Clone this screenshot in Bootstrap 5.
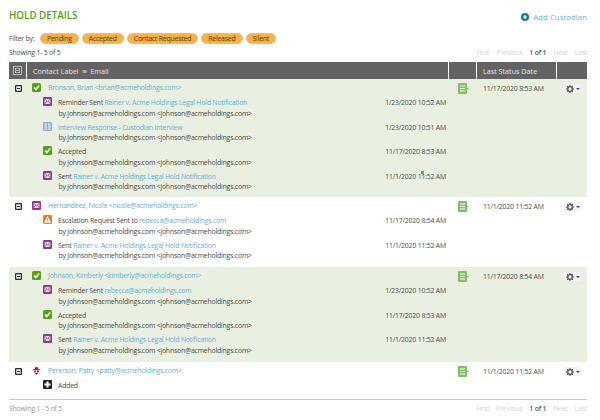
<!DOCTYPE html>
<html lang="en"><head><meta charset="utf-8"><title>Hold Details</title>
<link href="https://cdn.jsdelivr.net/npm/bootstrap@5.3.0/dist/css/bootstrap.min.css" rel="stylesheet">
<style>
html,body{width:600px;height:420px;overflow:hidden;background:#fff}
body{font-family:"Open Sans","Liberation Sans",sans-serif;font-size:6.9px;letter-spacing:-.2px;line-height:10px;color:#4a4a4a}
a{color:#5fb0d8;text-decoration:none}
.page-wrap{width:578px;margin-left:9px}
.title-bar{height:31px;padding-top:8px}
.hold-title{font-size:9.8px;line-height:16px;font-weight:600;color:#4ea510;margin:0;letter-spacing:0}
.add-link{font-size:7.7px;line-height:16px;margin-top:1px;letter-spacing:.1px}
.filter-bar{height:13px;margin-top:1px}
.pill-tag{background:#fbb040;border:1px solid #c9c3b4;border-radius:7px;color:#4a3d20;height:11px;line-height:9px;padding:0 6px;font-size:6.9px}
.pill-tag+.pill-tag{margin-left:3px}
.filter-label{width:31px}
.count-bar{height:17px;padding-top:2px;line-height:12px}
.pager{color:#d4d4d4}
.pager span{margin-left:7px}
.pager .cur{color:#555;font-weight:600}
.tbl{width:578px;table-layout:fixed;border-collapse:separate;border-spacing:0;margin:0}
.tbl th{background:#636363;color:#e8e8e8;font-weight:400;font-size:7.2px;letter-spacing:0;height:17px;padding:0 0 0 6px;border-right:1px solid #fff;vertical-align:middle}
.tbl th:last-child{border-right:0}
.tbl td{padding:0;vertical-align:top}
.c-tog{width:18px}.c-doc{width:28px}.c-date{width:80px}.c-gear{width:30px}
.row-on td{background:#e9f0e1}
.row-a{height:118px}.row-b{height:70px}.row-c{height:95px}.row-d{height:37px}
.tog-box{display:block;margin:5px 0 0 5px}
.head-main{display:flex;align-items:flex-start;height:15px;margin-top:3px;margin-left:5px}
.head-main .ic{margin-top:1px}
.ic{flex:none;display:block}
.name-line{margin-left:7px;line-height:12px}
.event-wrap{padding:0 0 0 16px}
.event-item{display:flex;height:24.5px}
.event-short{height:15px}
.ev-body{flex:1;padding-left:6px;padding-top:1px}
.ev-top{display:flex;justify-content:space-between;padding-right:3px}
.by-line{padding-left:.5px;margin-top:.5px}
.date-text{position:relative}
.stray-dot{position:absolute;left:36px;top:-1px;width:3px;height:3px;background:#0be60b}
.doc-ic{margin:4px 0 0 9px}
.st-date{display:block;padding:5px 0 0 6px;white-space:nowrap}
.gear-btn{display:flex;align-items:center;gap:2px;width:17px;height:9px;margin:5px 0 0 7px;background:#f2f2f2;border-radius:2px;padding-left:2px}
.caret-mini{width:0;height:0;border:2px solid transparent;border-top:2.5px solid #444;border-bottom:0}
.foot-bar{border-top:1px solid #c8c8c8;height:20px;padding-top:3px;line-height:12px;color:#999}
</style></head><body>
<svg width="0" height="0" class="d-block" style="position:absolute" aria-hidden="true"><defs>
<symbol id="i-tog" viewBox="0 0 9 9"><rect x="1" y="1" width="7" height="7" rx="1" fill="#2b2b2b"/><rect x="2.300" y="2.300" width="4.400" height="4.400" fill="#fff"/><rect x="3" y="4" width="3" height="1" fill="#2b2b2b"/></symbol>
<symbol id="i-tog-h" viewBox="0 0 9 9"><rect x=".5" y=".5" width="8" height="8" fill="#4c4c4c" stroke="#ddd" stroke-width=".8"/><rect x="2.3" y="2.3" width="4.4" height="4.4" fill="none" stroke="#eee" stroke-width=".7"/><rect x="3" y="4.1" width="3" height=".8" fill="#eee"/></symbol>
<symbol id="i-check" viewBox="0 0 9 9"><rect width="9" height="9" rx="1.5" fill="#4ea510"/><path d="M2 4.5 3.8 6.5 7.2 2.4" fill="none" stroke="#fff" stroke-width="1.6"/></symbol>
<symbol id="i-mail" viewBox="0 0 9 9"><rect width="9" height="9" rx="1.2" fill="#8a3a8e"/><rect x="1.6" y="2" width="5.8" height="5" fill="#f1dff2"/><path d="M1.6 2 4.5 4.8 7.4 2M1.6 7 3.6 4.2M7.4 7 5.4 4.2" fill="none" stroke="#8a3a8e" stroke-width=".8"/></symbol>
<symbol id="i-book" viewBox="0 0 9 9"><rect width="9" height="9" rx="1.2" fill="#8fb3d6"/><rect x="1.6" y="1.2" width="5.8" height="6.6" fill="#c4d6e8"/><rect x="4.2" y="1" width=".7" height="7" fill="#7d9fc2"/></symbol>
<symbol id="i-warn" viewBox="0 0 9 9"><rect width="9" height="9" rx="1.2" fill="#f47b20"/><path d="M4.5 1 8 7.8H1Z" fill="#fff"/><rect x="4.1" y="3.2" width=".8" height="2.4" fill="#f47b20"/><rect x="4.1" y="6.1" width=".8" height=".8" fill="#f47b20"/></symbol>
<symbol id="i-plus" viewBox="0 0 9 9"><rect width="9" height="9" rx="1" fill="#222"/><path d="M3.4 1.4h2.2v2h2v2.2h-2v2H3.4v-2h-2V3.4h2Z" fill="#fff"/></symbol>
<symbol id="i-spy" viewBox="0 0 9 9"><path d="M3 1.2h3l.5 2H8v1H1v-1h1.500Z" fill="#b01c1c"/><circle cx="3" cy="5.5" r="1" fill="#b01c1c"/><circle cx="6" cy="5.500" r="1" fill="#b01c1c"/><path d="M2.600 6.800h3.800L4.500 9Z" fill="#b01c1c"/></symbol>
<symbol id="i-doc" viewBox="0 0 11 11"><rect width="9" height="11" rx="1" fill="#7fc161"/><path d="M9 4.500 11 5.500 9 6.500Z" fill="#7fc161"/><path d="M2 3h5M2 5.500h5M2 8h5" stroke="#fff" stroke-width="1.100"/></symbol>
<symbol id="i-gear" viewBox="0 0 9 9"><circle cx="4.500" cy="4.500" r="2.600" fill="none" stroke="#555" stroke-width="1.500"/><path d="M4.500 0v2M4.500 7v2M0 4.500h2M7 4.500h2M1.300 1.300l1.300 1.300M6.400 6.400l1.300 1.300M7.700 1.300 6.400 2.600M2.600 6.400 1.300 7.700" stroke="#555" stroke-width="1.200"/></symbol>
</defs></svg>

<div class="page-wrap">
  <div class="title-bar d-flex justify-content-between">
    <h1 class="hold-title">HOLD DETAILS</h1>
    <a class="add-link d-flex align-items-center align-self-start gap-1" href="#"><svg width="8" height="8" viewBox="0 0 8 8" class="ic"><circle cx="4" cy="4" r="4" fill="#137f9e"/><path d="M4 2v4M2 4h4" stroke="#fff" stroke-width="1.200"/></svg>Add Custodian</a>
  </div>
  <div class="filter-bar d-flex align-items-center">
    <span class="filter-label">Filter by:</span>
    <span class="pill-tag">Pending</span><span class="pill-tag">Accepted</span><span class="pill-tag">Contact Requested</span><span class="pill-tag">Released</span><span class="pill-tag">Silent</span>
  </div>
  <div class="count-bar d-flex justify-content-between">
    <span>Showing 1- 5 of 5</span>
    <span class="pager"><span>First</span><span>Previous</span><span class="cur">1 of 1</span><span>Next</span><span>Last</span></span>
  </div>
  <table class="tbl">
    <colgroup><col class="c-tog"><col><col class="c-doc"><col class="c-date"><col class="c-gear"></colgroup>
    <thead><tr>
      <th class="px-0"><svg width="9" height="9" class="ic mx-auto"><use href="#i-tog-h"/></svg></th>
      <th>Contact Label &nbsp;<span>≡</span>&nbsp; Email</th><th></th><th>Last Status Date</th><th></th>
    </tr></thead>
    <tbody>
    <tr class="row-a row-on">
      <td><svg width="9" height="9" class="tog-box"><use href="#i-tog"/></svg></td>
      <td>
        <div class="head-main"><svg width="9" height="9" class="ic"><use href="#i-check"/></svg><a class="name-line" href="#">Bronson, Brian &lt;brian@acmeholdings.com&gt;</a></div>
        <div class="event-wrap">
          <div class="event-item"><svg width="9" height="9" class="ic"><use href="#i-mail"/></svg><div class="ev-body"><div class="ev-top"><span>Reminder Sent <a href="#">Rainer v. Acme Holdings Legal Hold Notification</a></span><span>1/23/2020 10:52 AM</span></div><div class="by-line">by johnson@acmeholdings.com &lt;johnson@acmeholdings.com&gt;</div></div></div>
          <div class="event-item"><svg width="9" height="9" class="ic"><use href="#i-book"/></svg><div class="ev-body"><div class="ev-top"><a href="#">Interview Response - Custodian Interview</a><span>1/23/2020 10:51 AM</span></div><div class="by-line">by johnson@acmeholdings.com &lt;johnson@acmeholdings.com&gt;</div></div></div>
          <div class="event-item"><svg width="9" height="9" class="ic"><use href="#i-check"/></svg><div class="ev-body"><div class="ev-top"><span>Accepted</span><span>11/17/2020 8:53 AM</span></div><div class="by-line">by johnson@acmeholdings.com &lt;johnson@acmeholdings.com&gt;</div></div></div>
          <div class="event-item"><svg width="9" height="9" class="ic"><use href="#i-mail"/></svg><div class="ev-body"><div class="ev-top"><span>Sent <a href="#">Rainer v. Acme Holdings Legal Hold Notification</a></span><span class="date-text">11/1/2020 11:52 AM<i class="stray-dot"></i></span></div><div class="by-line">by johnson@acmeholdings.com &lt;johnson@acmeholdings.com&gt;</div></div></div>
        </div>
      </td>
      <td><svg width="11" height="11" class="ic doc-ic"><use href="#i-doc"/></svg></td>
      <td><span class="st-date">11/17/2020 8:53 AM</span></td>
      <td><div class="gear-btn"><svg width="8" height="8" class="ic"><use href="#i-gear"/></svg><i class="caret-mini"></i></div></td>
    </tr>
    <tr class="row-b">
      <td><svg width="9" height="9" class="tog-box"><use href="#i-tog"/></svg></td>
      <td>
        <div class="head-main"><svg width="9" height="9" class="ic"><use href="#i-mail"/></svg><a class="name-line" href="#">Hernandeez, Nicole &lt;nicole@acmeholdings.com&gt;</a></div>
        <div class="event-wrap">
          <div class="event-item"><svg width="9" height="9" class="ic"><use href="#i-warn"/></svg><div class="ev-body"><div class="ev-top"><span>Escalation Request Sent to <a href="#">rebecca@acmeholdings.com</a></span><span>11/17/2020 8:54 AM</span></div><div class="by-line">by johnson@acmeholdings.com &lt;johnson@acmeholdings.com&gt;</div></div></div>
          <div class="event-item"><svg width="9" height="9" class="ic"><use href="#i-mail"/></svg><div class="ev-body"><div class="ev-top"><span>Sent <a href="#">Rainer v. Acme Holdings Legal Hold Notification</a></span><span>11/1/2020 11:52 AM</span></div><div class="by-line">by johnson@acmeholdings.com &lt;johnson@acmeholdings.com&gt;</div></div></div>
        </div>
      </td>
      <td><svg width="11" height="11" class="ic doc-ic"><use href="#i-doc"/></svg></td>
      <td><span class="st-date">11/1/2020 11:52 AM</span></td>
      <td><div class="gear-btn"><svg width="8" height="8" class="ic"><use href="#i-gear"/></svg><i class="caret-mini"></i></div></td>
    </tr>
    <tr class="row-c row-on">
      <td><svg width="9" height="9" class="tog-box"><use href="#i-tog"/></svg></td>
      <td>
        <div class="head-main"><svg width="9" height="9" class="ic"><use href="#i-check"/></svg><a class="name-line" href="#">Johnson, Kimberly &lt;kimberly@acmeholdings.com&gt;</a></div>
        <div class="event-wrap">
          <div class="event-item"><svg width="9" height="9" class="ic"><use href="#i-mail"/></svg><div class="ev-body"><div class="ev-top"><span>Reminder Sent <a href="#">rebecca@acmeholdings.com</a></span><span>1/23/2020 10:52 AM</span></div><div class="by-line">by johnson@acmeholdings.com &lt;johnson@acmeholdings.com&gt;</div></div></div>
          <div class="event-item"><svg width="9" height="9" class="ic"><use href="#i-check"/></svg><div class="ev-body"><div class="ev-top"><span>Accepted</span><span>11/17/2020 8:53 AM</span></div><div class="by-line">by johnson@acmeholdings.com &lt;johnson@acmeholdings.com&gt;</div></div></div>
          <div class="event-item"><svg width="9" height="9" class="ic"><use href="#i-mail"/></svg><div class="ev-body"><div class="ev-top"><span>Sent <a href="#">Rainer v. Acme Holdings Legal Hold Notification</a></span><span>11/1/2020 11:52 AM</span></div><div class="by-line">by johnson@acmeholdings.com &lt;johnson@acmeholdings.com&gt;</div></div></div>
        </div>
      </td>
      <td><svg width="11" height="11" class="ic doc-ic"><use href="#i-doc"/></svg></td>
      <td><span class="st-date">11/17/2020 8:54 AM</span></td>
      <td><div class="gear-btn"><svg width="8" height="8" class="ic"><use href="#i-gear"/></svg><i class="caret-mini"></i></div></td>
    </tr>
    <tr class="row-d">
      <td><svg width="9" height="9" class="tog-box"><use href="#i-tog"/></svg></td>
      <td>
        <div class="head-main"><svg width="9" height="9" class="ic"><use href="#i-spy"/></svg><a class="name-line" href="#">Pererson, Patty &lt;patty@acmeholdings.com&gt;</a></div>
        <div class="event-wrap">
          <div class="event-item event-short"><svg width="9" height="9" class="ic"><use href="#i-plus"/></svg><div class="ev-body"><div class="ev-top"><span>Added</span></div></div></div>
        </div>
      </td>
      <td><svg width="11" height="11" class="ic doc-ic"><use href="#i-doc"/></svg></td>
      <td><span class="st-date">11/1/2020 11:52 AM</span></td>
      <td><div class="gear-btn"><svg width="8" height="8" class="ic"><use href="#i-gear"/></svg><i class="caret-mini"></i></div></td>
    </tr>
    </tbody>
  </table>
  <div class="foot-bar d-flex justify-content-between">
    <span>Showing 1 - 5 of 5</span>
    <span class="pager"><span>First</span><span>Previous</span><span class="cur">1 of 1</span><span>Next</span><span>Last</span></span>
  </div>
</div>
</body></html>
